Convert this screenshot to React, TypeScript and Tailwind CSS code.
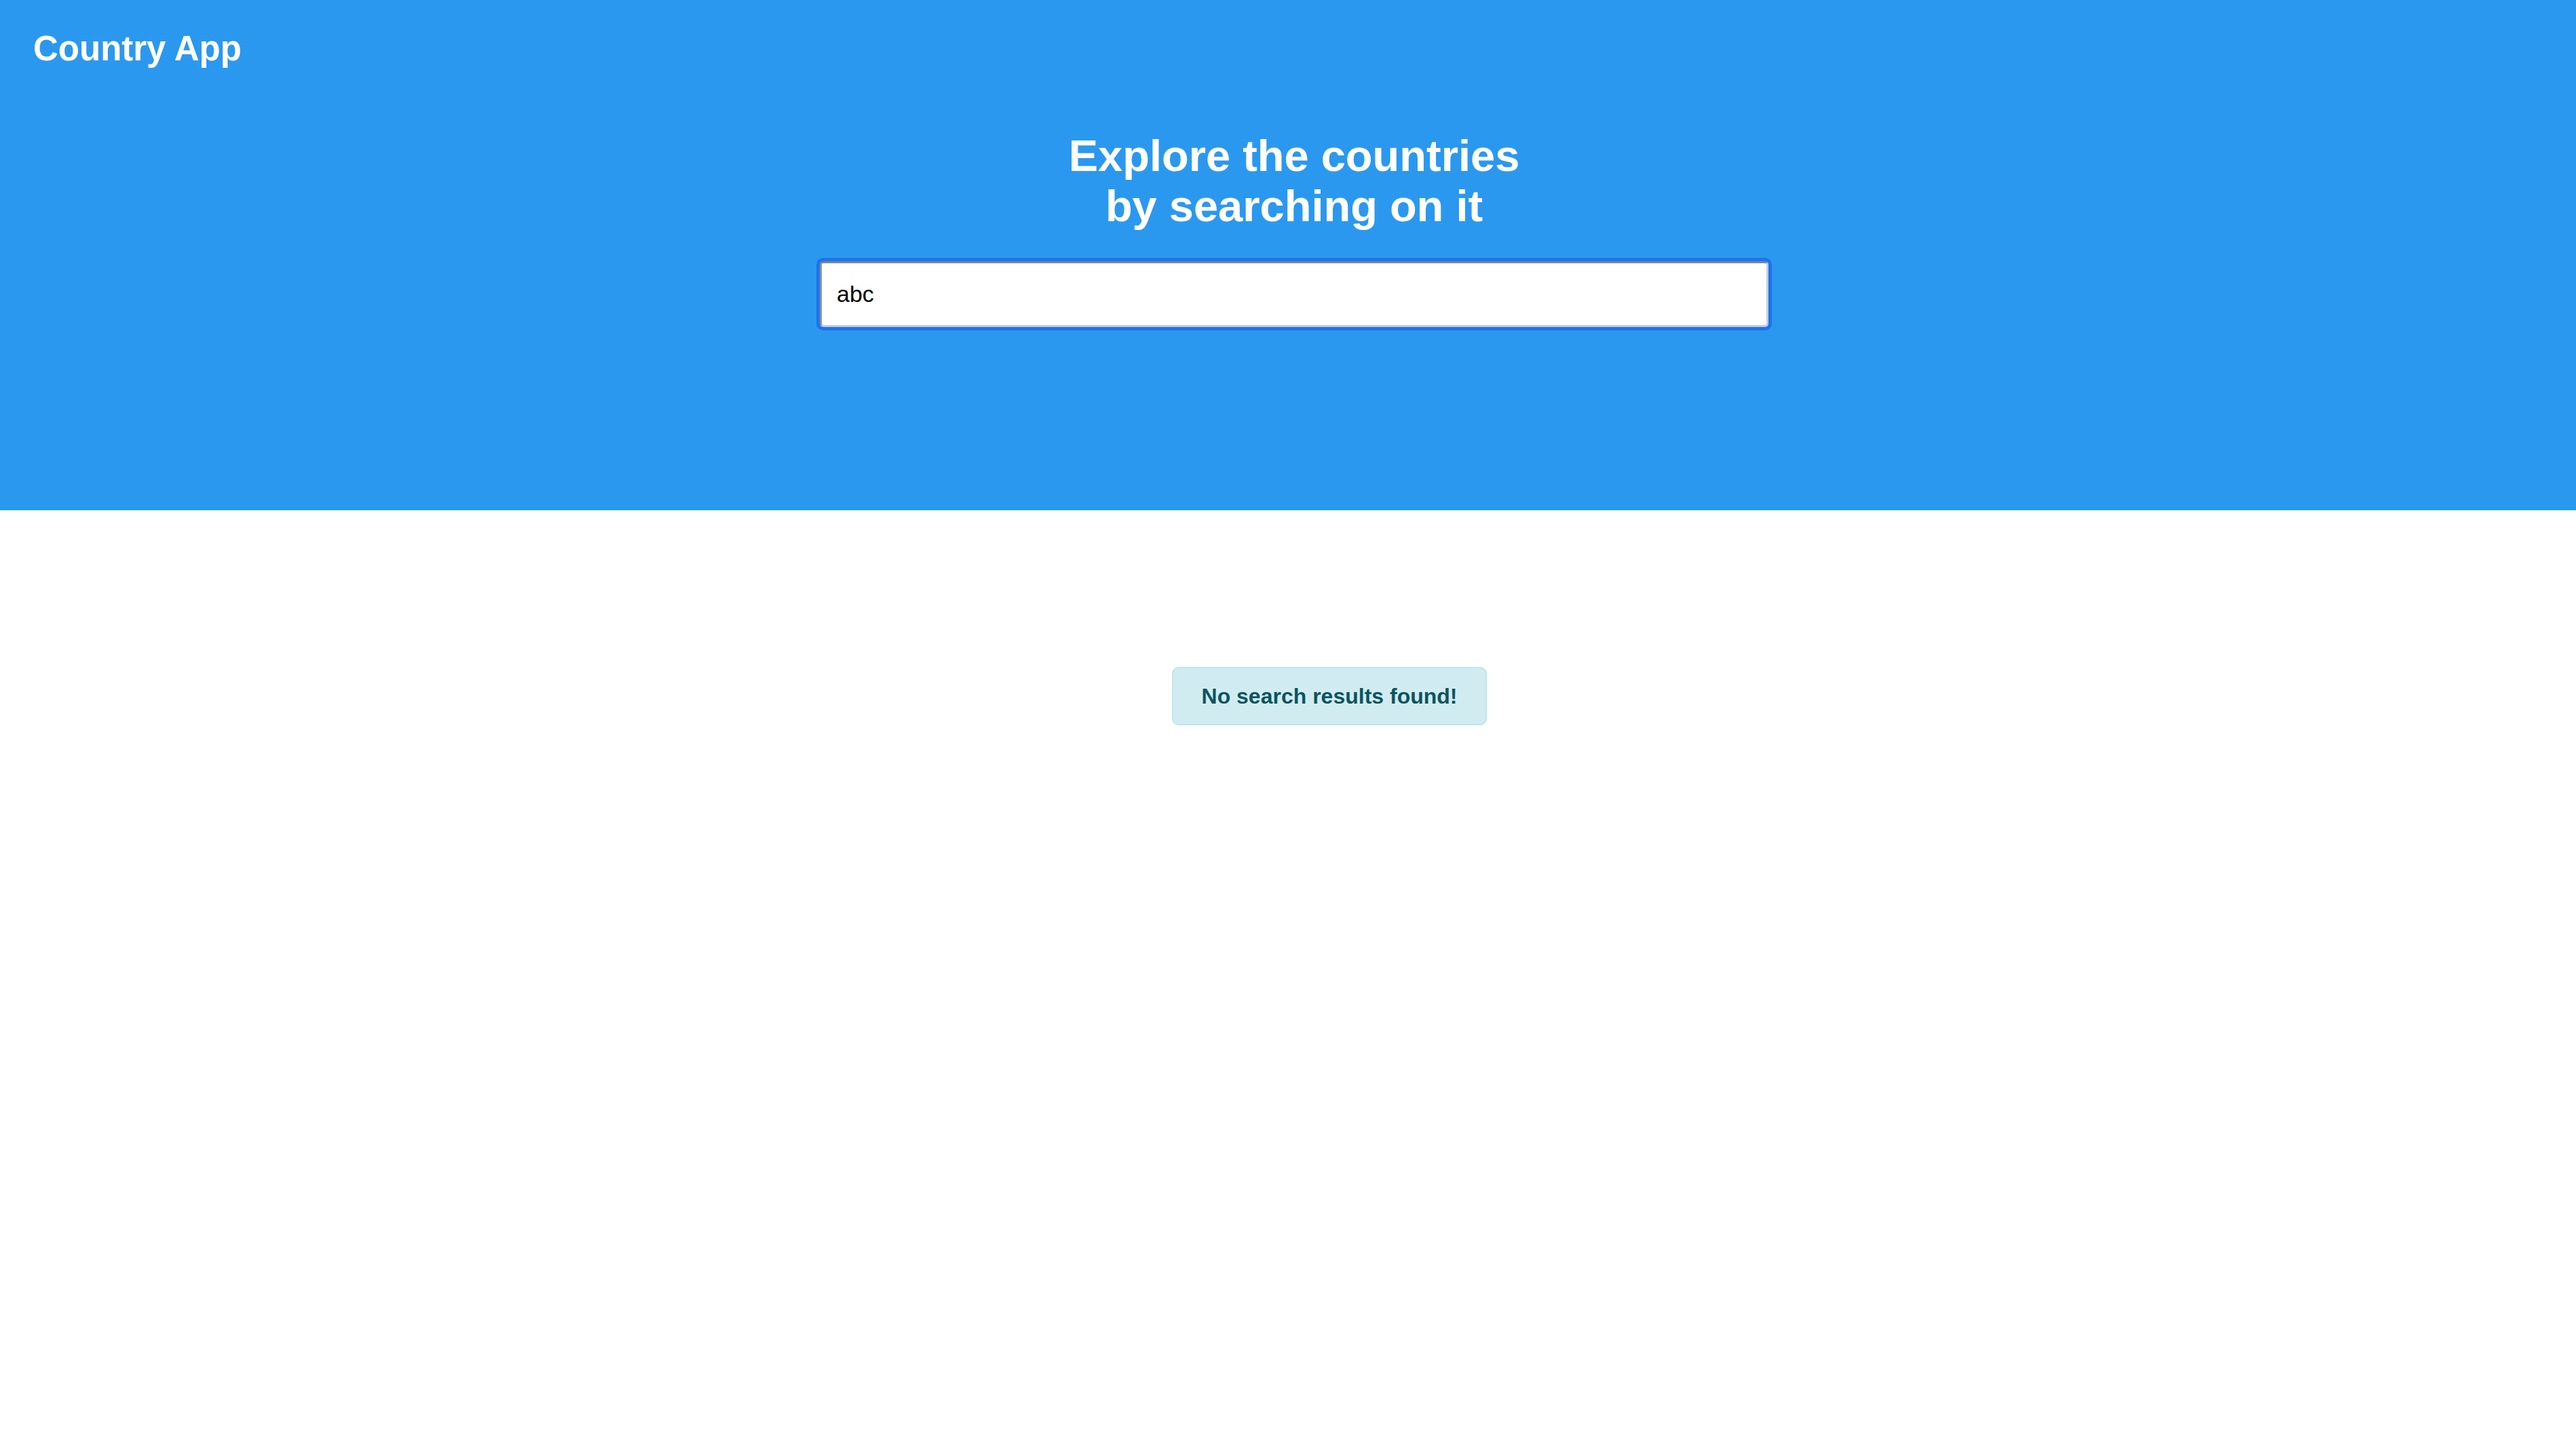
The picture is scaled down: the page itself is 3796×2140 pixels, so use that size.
import { useState } from 'react';

export default function App() {
  const [query, setQuery] = useState('abc');

  return (
    <div className="min-h-screen bg-white font-['Liberation_Sans',Arial,sans-serif]">
      {/* Header */}
      <header className="h-[752px] bg-[#2b98ef] pt-[43px]">
        <h1 className="pl-[49px] text-[51px] font-bold leading-[58px] text-white">
          Country App
        </h1>
        <div className="mt-[92px] flex flex-col items-center pl-[18px]">
          <h2 className="text-center text-[65px] font-bold leading-[74px] text-white">
            Explore the countries
            <br />
            by searching on it
          </h2>
          <input
            type="text"
            value={query}
            onChange={(e) => setQuery(e.target.value)}
            className="mt-[44px] h-[97px] w-[1398px] rounded-[5px] border-[3px] border-t-[#7b8499] border-l-[#8a8f9c] border-r-[#c4cbdd] border-b-[#c4cbdd] bg-white pl-[22px] text-[34px] text-black shadow-[0_0_0_5px_#1c74ec] outline-none"
          />
        </div>
      </header>

      {/* Results */}
      <main className="flex justify-center pl-[122px] pt-[231px]">
        <div className="rounded-[10px] border-2 border-[#bee5eb] bg-[#d1ecf1] px-[42px] py-[22.5px] text-[32px] font-bold leading-[37px] text-[#0c5460]">
          No search results found!
        </div>
      </main>
    </div>
  );
}
